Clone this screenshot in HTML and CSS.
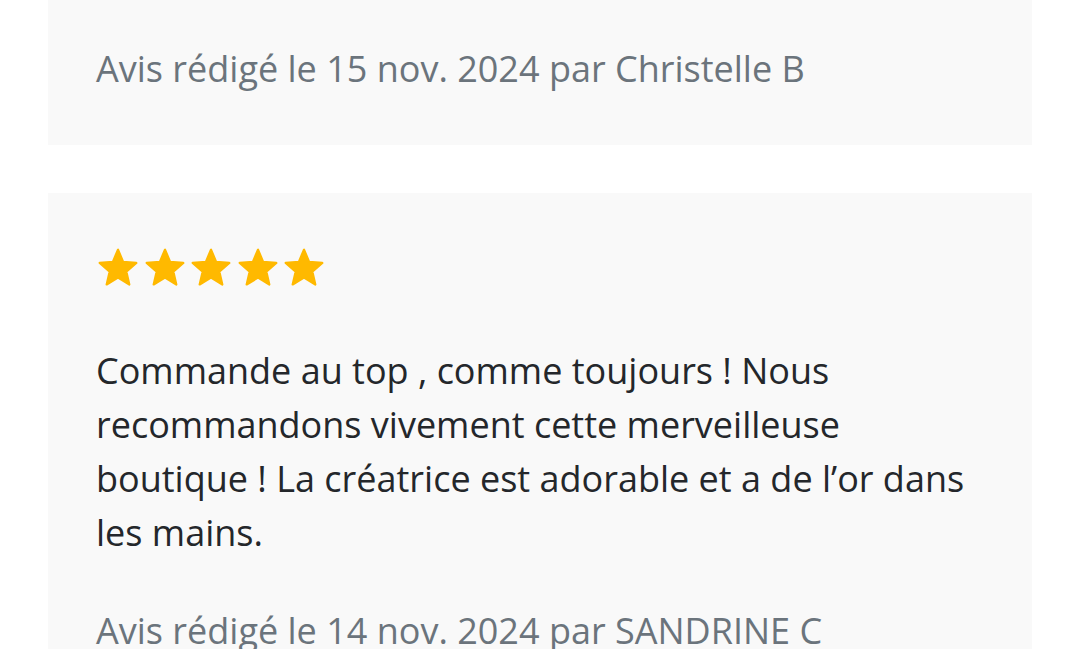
FILE: index.html
```html
<!DOCTYPE html>
<html lang="fr">
<head>
<meta charset="utf-8">
<title>Avis</title>
<link rel="stylesheet" href="styles.css">
</head>
<body>
<main class="reviews">
  <article class="card card-cut">
    <p class="meta">Avis rédigé le 15 nov. 2024 par Christelle B</p>
  </article>
  <article class="card">
    <div class="stars" aria-label="5 étoiles">
      <svg class="star" viewBox="0 0 24 24"><path d="M12 17.27L18.18 21l-1.64-7.03L22 9.24l-7.19-.61L12 2 9.19 8.63 2 9.24l5.46 4.730L5.82 21z"/></svg>
      <svg class="star" viewBox="0 0 24 24"><path d="M12 17.27L18.18 21l-1.64-7.03L22 9.24l-7.19-.61L12 2 9.19 8.63 2 9.24l5.46 4.73L5.82 21z"/></svg>
      <svg class="star" viewBox="0 0 24 24"><path d="M12 17.27L18.18 21l-1.64-7.03L22 9.24l-7.19-.61L12 2 9.19 8.63 2 9.24l5.46 4.73L5.82 21z"/></svg>
      <svg class="star" viewBox="0 0 24 24"><path d="M12 17.27L18.18 21l-1.64-7.03L22 9.24l-7.19-.61L12 2 9.19 8.63 2 9.24l5.46 4.73L5.82 21z"/></svg>
      <svg class="star" viewBox="0 0 24 24"><path d="M12 17.27L18.18 21l-1.64-7.03L22 9.24l-7.19-.61L12 2 9.19 8.63 2 9.24l5.46 4.73L5.82 21z"/></svg>
    </div>
    <p class="comment">Commande au top , comme toujours ! Nous recommandons vivement cette merveilleuse boutique ! La créatrice est adorable et a de l’or dans les mains.</p>
    <p class="meta">Avis rédigé le 14 nov. 2024 par SANDRINE C</p>
  </article>
</main>
</body>
</html>
```
FILE: styles.css
```css
html, body {
  margin: 0;
  padding: 0;
  background: #ffffff;
  height: 649px;
  overflow: hidden;
}
body {
  font-family: "Open Sans", "Noto Sans", sans-serif;
}
.reviews {
  display: flex;
  flex-direction: column;
  gap: 48px;
  padding: 0 48px;
}
.card {
  background: #f9f9f9;
  padding: 53px 48px 48px;
}
.card-cut {
  padding-top: 42px;
  padding-bottom: 49px;
}
.meta {
  margin: 0;
  font-size: 36px;
  line-height: 54px;
  color: #6b747c;
}
.stars {
  display: flex;
  gap: 2.5px;
  height: 44px;
}
.star {
  width: 44px;
  height: 44px;
  fill: #ffb900;
  stroke: #ffb900;
  stroke-width: 1.2;
  stroke-linejoin: round;
}
.comment {
  margin: 54px 0 44px;
  font-size: 36px;
  line-height: 54px;
  color: #24272b;
}
```
